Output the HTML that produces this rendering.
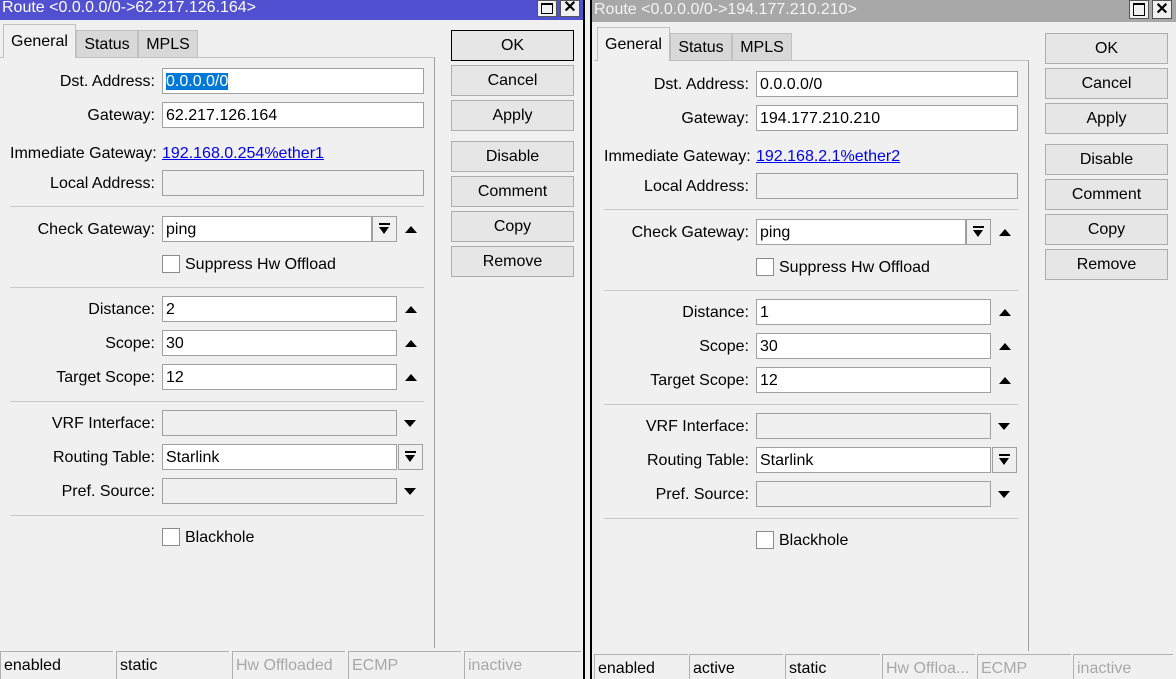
<!DOCTYPE html>
<html><head><meta charset="utf-8"><style>
*{margin:0;padding:0;box-sizing:border-box}
body{width:1176px;height:679px;overflow:hidden;background:#f0f0f0;font-family:"Liberation Sans",sans-serif;font-size:16px;color:#000;position:relative}
.a{position:absolute}
.win{position:absolute;top:0;height:679px;overflow:hidden}
.lbl{position:absolute;text-align:right;width:150px;left:5px;line-height:28px;white-space:nowrap}
.fld{position:absolute;height:26px;border:1px solid #a0a0a0;background:#fff;line-height:26px;padding-left:3px}
.g{background:#f0f0f0}
.sep{position:absolute;height:1px;background:#c8c8c8;left:10px;width:414px}
.btn{position:absolute;left:451px;width:123px;height:31px;border:1px solid #adadad;background:#e6e6e6;text-align:center;line-height:30px}
.up{position:absolute;width:0;height:0;border-left:6px solid transparent;border-right:6px solid transparent;border-bottom:7px solid #000}
.dn{position:absolute;width:0;height:0;border-left:6px solid transparent;border-right:6px solid transparent;border-top:7px solid #000}
.dd{position:absolute;width:25px;height:26px;border:1px solid #a0a0a0;background:#f0f0f0}
.dd:before{content:"";position:absolute;left:6px;top:6px;width:11px;height:2px;background:#000}
.dd:after{content:"";position:absolute;left:6px;top:10px;border-left:5.5px solid transparent;border-right:5.5px solid transparent;border-top:7px solid #000}
.cb{position:absolute;width:18px;height:18px;border:1px solid #8c8c8c;background:#fff}
.tab{position:absolute;height:28px;line-height:28px;text-align:center;border:1px solid #c0c0c0;background:#d8d8d8;top:30px}
.st{position:absolute;top:651px;height:28px;border-left:1px solid #b0b0b0;border-top:1px solid #b0b0b0;line-height:28px;padding-left:3px;white-space:nowrap;overflow:hidden}
.dis{color:#a8a8a8}
.lk{color:#0000ee;text-decoration:underline}
</style></head><body>

<!-- LEFT WINDOW -->
<div class="win" style="left:0;width:585px">
 <div class="a" style="left:0;top:0;width:585px;height:20px;background:#5050d0;color:#fff;line-height:16px;padding-left:2px;font-size:16px">Route &lt;0.0.0.0/0-&gt;62.217.126.164&gt;</div>
 <div class="a" style="left:537px;top:0;width:20px;height:17px;background:#f0f0f0;border:1px solid #555"><div class="a" style="left:3px;top:2px;width:12px;height:11px;border:1px solid #000;border-top-width:2px"></div></div>
 <div class="a" style="left:560px;top:0;width:20px;height:17px;background:#f0f0f0;border:1px solid #555;text-align:center;line-height:14px;font-weight:bold;font-size:16px">✕</div>
 <div class="a" style="left:583px;top:0;width:2px;height:679px;background:#000"></div>

 <div class="a" style="left:0;top:57px;width:435px;height:591px;border-top:1px solid #c0c0c0;border-right:1px solid #a0a0a0"></div>
 <div class="tab" style="left:3px;top:24px;width:73px;height:34px;background:#f0f0f0;border-bottom:none;line-height:34px">General</div>
 <div class="tab" style="left:76px;width:62px">Status</div>
 <div class="tab" style="left:138px;width:60px">MPLS</div>

 <div class="lbl" style="top:68px">Dst. Address:</div>
 <div class="fld" style="left:162px;top:68px;width:262px"><span style="background:#0078d7;color:#fff">0.0.0.0/0</span></div>
 <div class="lbl" style="top:102px">Gateway:</div>
 <div class="fld" style="left:162px;top:102px;width:262px">62.217.126.164</div>
 <div class="a" style="left:10px;top:141px;line-height:26px">Immediate Gateway:</div>
 <div class="a lk" style="left:162px;top:141px;line-height:26px">192.168.0.254%ether1</div>
 <div class="lbl" style="top:170px">Local Address:</div>
 <div class="fld g" style="left:162px;top:170px;width:262px"></div>
 <div class="sep" style="top:206px"></div>
 <div class="lbl" style="top:216px">Check Gateway:</div>
 <div class="fld" style="left:162px;top:216px;width:210px">ping</div>
 <div class="dd" style="left:372px;top:216px"></div>
 <div class="up" style="left:405px;top:226px"></div>
 <div class="cb" style="left:162px;top:255px"></div>
 <div class="a" style="left:185px;top:252px;line-height:26px">Suppress Hw Offload</div>
 <div class="sep" style="top:287px"></div>
 <div class="lbl" style="top:296px">Distance:</div>
 <div class="fld" style="left:162px;top:296px;width:235px">2</div>
 <div class="up" style="left:405px;top:306px"></div>
 <div class="lbl" style="top:330px">Scope:</div>
 <div class="fld" style="left:162px;top:330px;width:235px">30</div>
 <div class="up" style="left:405px;top:340px"></div>
 <div class="lbl" style="top:364px">Target Scope:</div>
 <div class="fld" style="left:162px;top:364px;width:235px">12</div>
 <div class="up" style="left:405px;top:374px"></div>
 <div class="sep" style="top:401px"></div>
 <div class="lbl" style="top:410px">VRF Interface:</div>
 <div class="fld g" style="left:162px;top:410px;width:235px"></div>
 <div class="dn" style="left:404px;top:420px"></div>
 <div class="lbl" style="top:444px">Routing Table:</div>
 <div class="fld" style="left:162px;top:444px;width:235px">Starlink</div>
 <div class="dd" style="left:398px;top:444px"></div>
 <div class="lbl" style="top:478px">Pref. Source:</div>
 <div class="fld g" style="left:162px;top:478px;width:235px"></div>
 <div class="dn" style="left:404px;top:488px"></div>
 <div class="sep" style="top:515px"></div>
 <div class="cb" style="left:162px;top:528px"></div>
 <div class="a" style="left:185px;top:525px;line-height:26px">Blackhole</div>

 <div class="btn" style="top:30px;border:1px solid #000">OK</div>
 <div class="btn" style="top:65px">Cancel</div>
 <div class="btn" style="top:100px">Apply</div>
 <div class="btn" style="top:141px">Disable</div>
 <div class="btn" style="top:176px">Comment</div>
 <div class="btn" style="top:211px">Copy</div>
 <div class="btn" style="top:246px">Remove</div>

 <div class="st" style="left:0;width:113px">enabled</div>
 <div class="st" style="left:116px;width:113px">static</div>
 <div class="st dis" style="left:232px;width:113px">Hw Offloaded</div>
 <div class="st dis" style="left:348px;width:113px">ECMP</div>
 <div class="st dis" style="left:464px;width:117px">inactive</div>
</div>

<div class="a" style="left:590px;top:0;width:2px;height:679px;background:#000"></div>

<!-- RIGHT WINDOW -->
<div class="win" style="left:592px;width:584px">
<div class="a" style="left:-2px;top:0;width:586px;height:22px;background:#a8a8a8;color:#f4f4f4;line-height:20px;padding-left:4px">Route &lt;0.0.0.0/0-&gt;194.177.210.210&gt;</div>
 <div class="a" style="left:537px;top:0;width:20px;height:19px;background:#f0f0f0;border:1px solid #555"><div class="a" style="left:3px;top:2px;width:12px;height:13px;border:1px solid #000;border-top-width:2px"></div></div>
 <div class="a" style="left:560px;top:0;width:20px;height:19px;background:#f0f0f0;border:1px solid #555;text-align:center;line-height:17px;font-weight:bold">✕</div>
<div class="a" style="left:2px;top:3px;width:584px;height:679px">
 <div class="a" style="left:0;top:57px;width:435px;height:591px;border-top:1px solid #c0c0c0;border-right:1px solid #a0a0a0"></div>
 <div class="tab" style="left:3px;top:24px;width:73px;height:34px;background:#f0f0f0;border-bottom:none;line-height:34px">General</div>
 <div class="tab" style="left:76px;width:62px">Status</div>
 <div class="tab" style="left:138px;width:60px">MPLS</div>

 <div class="lbl" style="top:68px">Dst. Address:</div>
 <div class="fld" style="left:162px;top:68px;width:262px">0.0.0.0/0</div>
 <div class="lbl" style="top:102px">Gateway:</div>
 <div class="fld" style="left:162px;top:102px;width:262px">194.177.210.210</div>
 <div class="a" style="left:10px;top:141px;line-height:26px">Immediate Gateway:</div>
 <div class="a lk" style="left:162px;top:141px;line-height:26px">192.168.2.1%ether2</div>
 <div class="lbl" style="top:170px">Local Address:</div>
 <div class="fld g" style="left:162px;top:170px;width:262px"></div>
 <div class="sep" style="top:206px"></div>
 <div class="lbl" style="top:216px">Check Gateway:</div>
 <div class="fld" style="left:162px;top:216px;width:210px">ping</div>
 <div class="dd" style="left:372px;top:216px"></div>
 <div class="up" style="left:405px;top:226px"></div>
 <div class="cb" style="left:162px;top:255px"></div>
 <div class="a" style="left:185px;top:252px;line-height:26px">Suppress Hw Offload</div>
 <div class="sep" style="top:287px"></div>
 <div class="lbl" style="top:296px">Distance:</div>
 <div class="fld" style="left:162px;top:296px;width:235px">1</div>
 <div class="up" style="left:405px;top:306px"></div>
 <div class="lbl" style="top:330px">Scope:</div>
 <div class="fld" style="left:162px;top:330px;width:235px">30</div>
 <div class="up" style="left:405px;top:340px"></div>
 <div class="lbl" style="top:364px">Target Scope:</div>
 <div class="fld" style="left:162px;top:364px;width:235px">12</div>
 <div class="up" style="left:405px;top:374px"></div>
 <div class="sep" style="top:401px"></div>
 <div class="lbl" style="top:410px">VRF Interface:</div>
 <div class="fld g" style="left:162px;top:410px;width:235px"></div>
 <div class="dn" style="left:404px;top:420px"></div>
 <div class="lbl" style="top:444px">Routing Table:</div>
 <div class="fld" style="left:162px;top:444px;width:235px">Starlink</div>
 <div class="dd" style="left:398px;top:444px"></div>
 <div class="lbl" style="top:478px">Pref. Source:</div>
 <div class="fld g" style="left:162px;top:478px;width:235px"></div>
 <div class="dn" style="left:404px;top:488px"></div>
 <div class="sep" style="top:515px"></div>
 <div class="cb" style="left:162px;top:528px"></div>
 <div class="a" style="left:185px;top:525px;line-height:26px">Blackhole</div>

 <div class="btn" style="top:30px;border:1px solid #adadad">OK</div>
 <div class="btn" style="top:65px">Cancel</div>
 <div class="btn" style="top:100px">Apply</div>
 <div class="btn" style="top:141px">Disable</div>
 <div class="btn" style="top:176px">Comment</div>
 <div class="btn" style="top:211px">Copy</div>
 <div class="btn" style="top:246px">Remove</div>

 <div class="st" style="left:0;width:94px">enabled</div>
 <div class="st" style="left:95px;width:94px">active</div>
 <div class="st" style="left:191px;width:95px">static</div>
 <div class="st dis" style="left:288px;width:93px">Hw Offloa...</div>
 <div class="st dis" style="left:383px;width:94px">ECMP</div>
 <div class="st dis" style="left:479px;width:100px">inactive</div>
</div>
</div>
</body></html>
